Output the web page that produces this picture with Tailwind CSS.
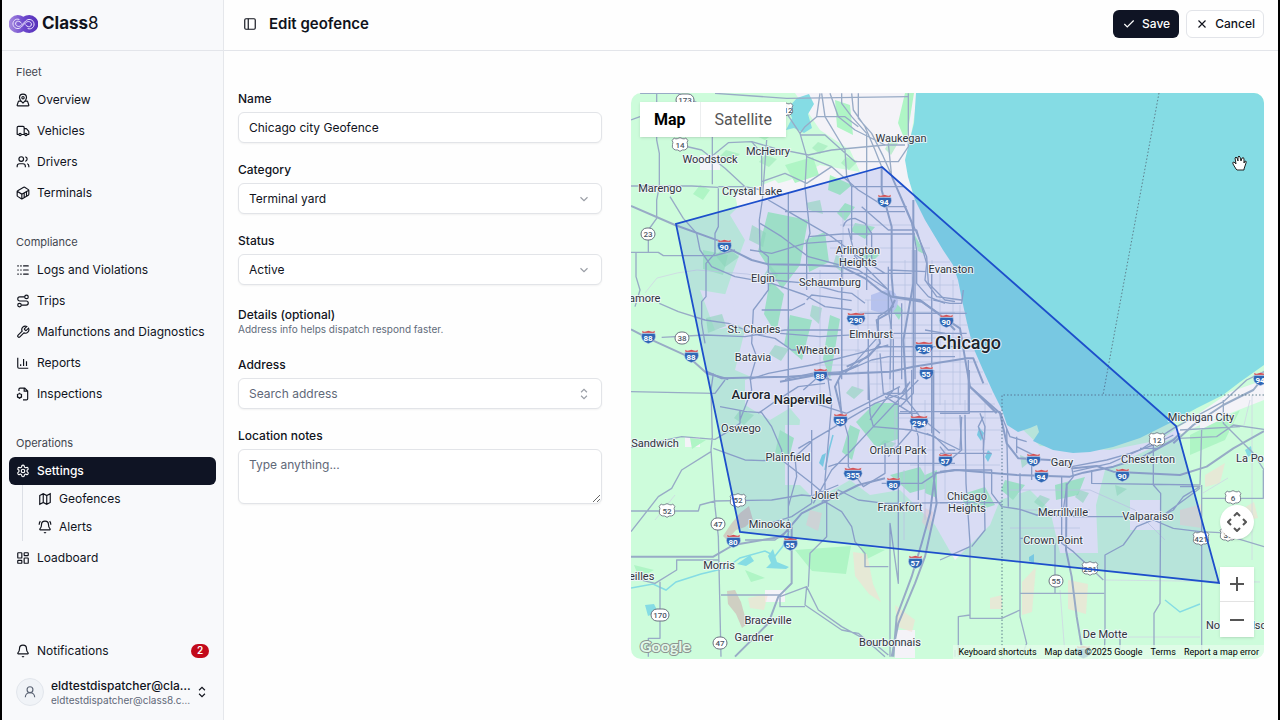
<!DOCTYPE html>
<html lang="en">
<head>
<meta charset="utf-8">
<meta name="viewport" content="width=device-width, initial-scale=1">
<title>Edit geofence - Class8</title>
<script src="https://cdn.jsdelivr.net/npm/@tailwindcss/browser@4"></script>
</head>
<body class="flex min-h-screen border-x-2 border-black bg-[#fefefe] font-[Inter,sans-serif] text-xs text-[#10131c]">

<!-- Shared icons -->
<svg class="hidden" aria-hidden="true">
  <symbol id="updown" viewBox="0 0 24 24"><path d="m7 15 5 5 5-5M7 9l5-5 5 5"/></symbol>
  <symbol id="down" viewBox="0 0 24 24"><path d="m6 9 6 6 6-6"/></symbol>
  <symbol id="bell" viewBox="0 0 24 24"><path d="M10.3 21a2 2 0 0 0 3.4 0M3.3 15.3A1 1 0 0 0 4 17h16a1 1 0 0 0 .7-1.7C19.4 14 18 12.500 18 8A6 6 0 0 0 6 8c0 4.500-1.400 6-2.700 7.300"/></symbol>
  <symbol id="i2" viewBox="0 0 45 42"><path d="M3 10Q-1 20 4 29Q10 38 22 41Q35 38 41 29Q46 20 42 10Z" fill="#2f66b5" stroke="#e3e9f5" stroke-width="1.500"/><path d="M3 2l7 3 12-3 13 3 7-3-1 7H4Z" fill="#cf464d" stroke="#eee" stroke-width="1"/></symbol>
  <symbol id="i3" viewBox="0 0 60 42"><path d="M5 10Q-1 20 6 29Q14 38 30 41Q46 38 54 29Q61 20 55 10Z" fill="#2f66b5" stroke="#e3e9f5" stroke-width="1.500"/><path d="M5 2l9 3 16-3 16 3 9-3-1 7H6Z" fill="#cf464d" stroke="#eee" stroke-width="1"/></symbol>
  <symbol id="us" viewBox="0 0 52 44"><path d="M9 3q5 4 9 2 5-2 8-3 3 1 8 3 4 2 9-2l6 7q-4 6-1 12 3 9-4 14-5 3-11 2l-7 4-7-4q-6 1-11-2-7-5-4-14 3-6-1-12Z" fill="#fff" stroke="#6b7280" stroke-width="2.500"/></symbol>
</svg>

<aside class="flex w-[222px] shrink-0 flex-col border-r border-[#e5e7eb] bg-[#f8f9fb]">
  <div class="flex h-[51px] items-center gap-1 border-b border-[#e3e5ea] px-[7px] pb-[3px]">
    <svg class="h-[18px] w-[29px]" viewBox="0 0 87 54" fill="none" aria-hidden="true">
      <defs><linearGradient id="lg"><stop stop-color="#a78bdf"/><stop offset=".5" stop-color="#6d48cd"/><stop offset="1" stop-color="#5530b8"/></linearGradient></defs>
      <path d="M26 0q10 0 17 5 7-5 18-5a26 26 0 0 1 0 54q-11 0-18-5-7 5-17 5a26 26 0 0 1 0-54Z" fill="url(#lg)"/>
      <path d="M37 24c-8-10-19-5-17 4 3 8 12 8 18 2l12-12c8-8 20-5 24 4 5 12-6 23-17 19M50 30c8 10 19 5 17-4-3-8-12-8-18-2L37 36c-8 8-20 5-24-4-5-12 6-23 17-19" stroke="#eee7ff" stroke-width="3" stroke-linecap="round"/>
    </svg>
    <span class="text-[17px] font-bold">Class<span class="font-normal">8</span></span>
  </div>

  <nav class="flex flex-1 flex-col gap-[21px] px-[7px] pt-[7px] [&_a]:flex [&_a]:h-7 [&_a]:items-center [&_a]:gap-[7px] [&_a]:rounded-md [&_a]:px-[7px] [&_a]:whitespace-nowrap [&_h2]:flex [&_h2]:h-7 [&_h2]:items-center [&_h2]:px-[7px] [&_h2]:text-[11px] [&_h2]:text-[#42464f] [&_svg]:size-[14px] [&_svg]:shrink-0 [&_svg]:fill-none [&_svg]:stroke-current [&_svg]:stroke-2 [&_ul]:flex [&_ul]:flex-col" aria-label="Main">
    <section>
      <h2>Fleet</h2>
      <ul class="gap-[3px]">
        <li><a href="#"><svg viewBox="0 0 24 24"><path d="M18 8c0 3.600-3.900 7.400-5.400 8.800a1 1 0 0 1-1.200 0C9.900 15.400 6 11.600 6 8a6 6 0 0 1 12 0"/><circle cx="12" cy="8" r="2"/><path d="M8.700 14H5a1 1 0 0 0-1 .7l-2 6A1 1 0 0 0 3 22h18a1 1 0 0 0 1-1.300l-2-6a1 1 0 0 0-1-.7h-3.700"/></svg>Overview</a></li>
        <li><a href="#"><svg viewBox="0 0 24 24"><path d="M14 18V6a2 2 0 0 0-2-2H4a2 2 0 0 0-2 2v11a1 1 0 0 0 1 1h2M15 18H9M19 18h2a1 1 0 0 0 1-1v-3.600a1 1 0 0 0-.2-.7l-3.500-4.300a1 1 0 0 0-.8-.4H14"/><circle cx="17" cy="18" r="2"/><circle cx="7" cy="18" r="2"/></svg>Vehicles</a></li>
        <li><a href="#"><svg viewBox="0 0 24 24"><path d="M16 21v-2a4 4 0 0 0-4-4H6a4 4 0 0 0-4 4v2M22 21v-2a4 4 0 0 0-3-3.900M16 3.100a4 4 0 0 1 0 7.800"/><circle cx="9" cy="7" r="4"/></svg>Drivers</a></li>
        <li><a href="#"><svg viewBox="0 0 24 24"><path d="M22 7.700c0-.6-.4-1.200-.8-1.500l-6.300-3.900a1.700 1.700 0 0 0-1.700 0l-10.300 6c-.5.200-.9.800-.9 1.400v6.600c0 .5.400 1.200.8 1.500l6.300 3.900a1.700 1.700 0 0 0 1.700 0l10.300-6c.5-.3.900-1 .9-1.500ZM10 21.900V14L2.100 9.100M10 14l11.900-6.900M14 19.800v-8.100M18 17.500V9.400"/></svg>Terminals</a></li>
      </ul>
    </section>
    <section>
      <h2>Compliance</h2>
      <ul class="gap-[3px]">
        <li><a href="#"><svg viewBox="0 0 24 24"><path d="M13 12h8M13 19h8M13 5h8M3 5h1M3 12h1M3 19h1M8 5h1M8 12h1M8 19h1" stroke-linecap="round"/></svg>Logs and Violations</a></li>
        <li><a href="#"><svg viewBox="0 0 24 24"><circle cx="6" cy="19" r="3"/><path d="M9 19h8.500a3.500 3.500 0 0 0 0-7h-11a3.500 3.500 0 0 1 0-7H15"/><circle cx="18" cy="5" r="3"/></svg>Trips</a></li>
        <li><a href="#"><svg viewBox="0 0 24 24"><path d="M14.700 6.300a1 1 0 0 0 0 1.400l1.600 1.600a1 1 0 0 0 1.400 0l3.800-3.800a6 6 0 0 1-8 8l-6.900 6.900a2.100 2.100 0 0 1-3-3l6.900-6.900a6 6 0 0 1 8-8z"/></svg>Malfunctions and Diagnostics</a></li>
        <li><a href="#"><svg viewBox="0 0 24 24"><path d="M3 3v16a2 2 0 0 0 2 2h16M18 17V9M13 17V5M8 17v-3"/></svg>Reports</a></li>
        <li><a href="#"><svg viewBox="0 0 24 24"><path d="M5 7V4a2 2 0 0 1 2-2h8l5 5v13a2 2 0 0 1-2 2h-6M14 2v5h6"/><circle cx="6" cy="15" r="3.500"/><path d="M6 10v1.500M6 18.500V20M1.700 12.500l1.300.8M9 16.700l1.300.8M1.700 17.500l1.300-.8M9 13.300l1.300-.8"/></svg>Inspections</a></li>
      </ul>
    </section>
    <section>
      <h2>Operations</h2>
      <ul>
        <li><a href="#" class="bg-[#0f1424] font-medium text-white" aria-current="page"><svg viewBox="0 0 24 24"><path d="M12.200 2h-.4a2 2 0 0 0-2 2v.2a2 2 0 0 1-1 1.700l-.4.300a2 2 0 0 1-2 0l-.2-.1a2 2 0 0 0-2.700.7l-.2.400a2 2 0 0 0 .7 2.700l.2.100a2 2 0 0 1 1 1.700v.5a2 2 0 0 1-1 1.700l-.2.100a2 2 0 0 0-.7 2.700l.2.400a2 2 0 0 0 2.700.7l.2-.1a2 2 0 0 1 2 0l.4.300a2 2 0 0 1 1 1.700v.2a2 2 0 0 0 2 2h.4a2 2 0 0 0 2-2v-.2a2 2 0 0 1 1-1.700l.4-.3a2 2 0 0 1 2 0l.2.100a2 2 0 0 0 2.700-.7l.2-.4a2 2 0 0 0-.7-2.700l-.2-.1a2 2 0 0 1-1-1.700v-.5a2 2 0 0 1 1-1.700l.2-.1a2 2 0 0 0 .7-2.700l-.2-.4a2 2 0 0 0-2.700-.7l-.2.100a2 2 0 0 1-2 0l-.4-.3a2 2 0 0 1-1-1.700V4a2 2 0 0 0-2-2z"/><circle cx="12" cy="12" r="3"/></svg>Settings</a>
          <ul class="mb-[3px] ml-[13px] border-l border-[#dcdfe5] pl-2">
            <li><a href="#"><svg viewBox="0 0 24 24"><path d="m3 6 6-3 6 3 6-3v15l-6 3-6-3-6 3ZM9 3v15M15 6v15"/></svg>Geofences</a></li>
            <li><a href="#"><svg viewBox="0 0 24 24"><use href="#bell"/><path d="M22 8c0-2.300-.8-4.300-2-6M4 2C2.800 3.700 2 5.700 2 8"/></svg>Alerts</a></li>
          </ul>
        </li>
        <li><a href="#"><svg viewBox="0 0 24 24"><rect x="3" y="3" width="7" height="9" rx="1"/><rect x="14" y="3" width="7" height="5" rx="1"/><rect x="14" y="12" width="7" height="9" rx="1"/><rect x="3" y="16" width="7" height="5" rx="1"/></svg>Loadboard</a></li>
      </ul>
    </section>
  </nav>

  <div class="flex flex-col gap-[7px] px-[7px] pb-2">
    <a href="#" class="flex h-7 items-center gap-[7px] px-[7px]">
      <svg class="size-[14px] fill-none stroke-current stroke-2"><use href="#bell"/></svg>
      <span class="flex-1">Notifications</span>
      <span class="flex h-[14px] w-[18px] items-center justify-center rounded-full bg-[#c20a1b] text-[10px] font-semibold text-white">2</span>
    </a>
    <button type="button" class="flex h-10 items-center gap-[7px] px-[7px] text-left">
      <span class="flex size-7 shrink-0 items-center justify-center rounded-full border border-[#e2e6ec] bg-[#f0f3f7] text-[#5b6474]">
        <svg class="size-[14px] fill-none stroke-current stroke-2" viewBox="0 0 24 24"><circle cx="12" cy="8" r="5"/><path d="M20 21a8 8 0 0 0-16 0"/></svg>
      </span>
      <span class="-mr-[5px] flex min-w-0 flex-1 flex-col">
        <span class="truncate leading-[15px] font-medium">eldtestdispatcher@class8.com</span>
        <span class="truncate text-[10px] leading-[14px] font-normal text-[#5f6878]">eldtestdispatcher@class8.com</span>
      </span>
      <svg class="size-[14px] shrink-0 fill-none stroke-current stroke-2"><use href="#updown"/></svg>
    </button>
  </div>
</aside>

<div class="flex min-w-0 flex-1 flex-col">
  <header class="flex h-[51px] items-center border-b border-[#e3e5ea] px-[14px] pb-[3px]">
    <button type="button" class="ml-[5px] mr-3" aria-label="Toggle sidebar">
      <svg class="size-[14px] fill-none stroke-current stroke-2" viewBox="0 0 24 24"><rect x="3" y="3" width="18" height="18" rx="2"/><path d="M9 3v18"/></svg>
    </button>
    <h1 class="flex-1 text-[15px] font-semibold">Edit geofence</h1>
    <div class="flex gap-[7px] font-medium">
      <button type="button" class="flex h-7 items-center gap-1.5 rounded-md bg-[#0f1424] px-[9px] text-white"><svg class="size-[14px] fill-none stroke-current stroke-2" viewBox="0 0 24 24"><path d="M20 6 9 17l-5-5"/></svg>Save</button>
      <button type="button" class="flex h-7 items-center gap-1.5 rounded-md border border-[#e2e4e9] bg-white px-2"><svg class="size-[14px] fill-none stroke-current stroke-2" viewBox="0 0 24 24"><path d="M18 6 6 18M6 6l12 12"/></svg>Cancel</button>
    </div>
  </header>

  <main class="grid grid-cols-[364fr_633fr] items-start gap-[29px] px-[14px] pt-[42px]">
    <form class="flex flex-col gap-[21px] [&_label]:leading-3 [&_label]:font-medium">
      <div class="flex flex-col gap-[7px]">
        <label for="name">Name</label>
        <input id="name" value="Chicago city Geofence" class="h-[31px] w-full rounded-md border border-[#e2e4e8] bg-white px-[10px] shadow-xs">
      </div>
      <div class="flex flex-col gap-[7px]">
        <label for="category">Category</label>
        <div class="relative">
          <select id="category" class="h-[31px] w-full appearance-none rounded-md border border-[#e2e4e8] bg-white px-[10px] shadow-xs"><option>Terminal yard</option></select>
          <svg class="pointer-events-none absolute top-[9px] right-[11px] size-[14px] fill-none stroke-[#9a9ea6] stroke-2"><use href="#down"/></svg>
        </div>
      </div>
      <div class="flex flex-col gap-[7px]">
        <label for="status">Status</label>
        <div class="relative">
          <select id="status" class="h-[31px] w-full appearance-none rounded-md border border-[#e2e4e8] bg-white px-[10px] shadow-xs"><option>Active</option></select>
          <svg class="pointer-events-none absolute top-[9px] right-[11px] size-[14px] fill-none stroke-[#9a9ea6] stroke-2"><use href="#down"/></svg>
        </div>
      </div>
      <div class="flex flex-col pt-px pb-[2px]">
        <h2 class="leading-[15px] font-medium">Details (optional)</h2>
        <p class="text-[10px] leading-[14px] text-[#5f6b7a]">Address info helps dispatch respond faster.</p>
      </div>
      <div class="flex flex-col gap-[7px]">
        <label for="address">Address</label>
        <div class="relative">
          <input id="address" placeholder="Search address" class="h-[31px] w-full rounded-md border border-[#e2e4e8] bg-white px-[10px] shadow-xs placeholder:text-[#5f6878]">
          <svg class="pointer-events-none absolute top-[9px] right-[11px] size-[14px] fill-none stroke-[#9a9ea6] stroke-2"><use href="#updown"/></svg>
        </div>
      </div>
      <div class="flex flex-col gap-[7px]">
        <label for="notes">Location notes</label>
        <textarea id="notes" placeholder="Type anything..." class="block h-[55px] w-full rounded-md border border-[#e2e4e8] bg-white px-[10px] py-[7px] shadow-xs placeholder:text-[#5f6878]"></textarea>
      </div>
    </form>

    <section class="relative overflow-hidden rounded-[10px] font-[Roboto,sans-serif]" aria-label="Geofence map">
      <svg class="block w-full" viewBox="631 93 633 566" role="img" aria-label="Map of the Chicago area with the geofence">
        <rect x="631" y="93" width="633" height="566" fill="#cdfcdb"/>
        <!-- built-up areas -->
        <g fill="#f4f3f8">
          <path d="M795 93H918L907 160L960 280L1002 410L1040 446L1110 450L1160 440L1230 392L1264 380V400L1200 425L1105 470L1096 505L1098 553H1060L1050 510L1030 490L1000 500L990 525L955 560L935 525L900 490L870 495L850 480L815 500L795 480L800 420L770 385L735 370L745 330L720 310L730 280L745 240L730 215L755 190L790 180L820 165L860 172L850 150L820 130Z"/>
          <path d="M735 195l40-15 20 20-10 45-40-5ZM700 290l30 5 10 30-25 5ZM745 380l30-10 20 35-25 15-25-15ZM785 425h25v60h-25ZM1130 500h30v30h-30ZM685 437h15v10h-15ZM765 590h20v12h-20ZM895 630h20v28h-20ZM700 155h20v15h-20ZM1200 420h30v12h-30Z"/>
        </g>
        <!-- woods and farmland -->
        <g fill="#aff5c5">
          <path d="M768 212l40 8-8 45-18 24-24-38ZM790 315l22 5-10 40-18-15ZM875 403h23v36l-22 8-20-25ZM805 240l20-8 4 30-20 10ZM703 250l25 5-5 20-20-6ZM745 115l25-10 15 20-20 15-22-10ZM905 93h9l-8 50-8-20ZM835 100l15 5 3 30-16-8ZM785 165l28-8 6 18-24 8ZM830 175l22 10-12 10-12-5ZM770 280l14 14-8 40-12-20ZM890 475l30-8 12 20-22 6ZM795 550l56-4-5 28-34-3ZM1055 485l30-8-7 18-22 5ZM925 475l12-5v28l-12-5ZM845 203l10 4-10 14-8-8ZM912 230l14 25-8-4ZM830 315l10 4-10 60-7-20ZM893 300l10 10-4 10-7-10ZM850 425l10 5-8 30-10-8ZM700 185l10 5-7 10-10-6ZM634 565l20 5-15 8ZM690 438l16 2-14 9ZM860 545l25 5-20 10ZM1005 480l20 5-12 15-12-10ZM1190 435l50-25-15 30-35 15ZM960 495l25-8 10 18-25 8ZM745 570l20 8-14 4ZM780 430l14 8-5 20-14-5ZM855 223l20 4-10 12-14-8ZM868 250l12 4-12 12-8-8Z"/>
        </g>
        <g fill="#9ceab7" opacity=".6">
          <path d="M715 255l12-8 12 10-14 10ZM752 225l14 8-3 14-14-7ZM770 265l8 10-8 12-7-10ZM836 255l10 4-3 14-10-8ZM806 203l14-3 3 14-14-4ZM706 318l16-4 4 12-18 7ZM775 345l14 4-8 12-12-7ZM812 305l10 3-3 16-9-8ZM740 410l14 5-10 10-10-7ZM852 386l12 4-10 9-8-6ZM884 440l12 3-8 9-10-6ZM1020 455l12 5-10 8ZM1080 490l9 3-6 10-8-6ZM1115 485l12 4-10 7ZM1128 430l16-4-8 9ZM846 157l12 4-9 9-8-7ZM818 142l10 4-8 8-8-6ZM890 140l8 3-7 12-6-6ZM650 110l10 4-7 8-9-5ZM726 150l14 4-10 8-10-6ZM765 155l12 4-8 8-10-5ZM1040 495l10 4-8 9-8-6Z"/>
        </g>
        <g fill="#f6dcd2" opacity=".6">
          <path d="M853 552l14 2 6 30 8 18-12-8-14-18ZM748 598l20-4-4 16-14-2ZM895 605l20 15-3 12-14-5ZM990 598l12-3v14h-12ZM1022 582l14-15-4 45-10 3ZM1068 580l20 4-2 30-18-5ZM1180 510l22-6v24l-22-3ZM1205 475l20-12-5 20-15 4ZM810 510l12 3-4 18-12-6ZM925 508l8 4-3 20-8-10ZM1240 510l14-8 4 16-14 3Z"/>
        </g>
        <g fill="#cfc3bb" opacity=".8"><path d="M740 513l9-7 4 14-8 7-9 3-9 10-4-4 8-12ZM727 591l8-1 6 12 6 22-5 4-6-14-8-10Z"/></g>
        <path d="M882 291q14-4 16 10-1 13-14 13l-13-4v-15Z" fill="#ccd5f2"/>
        <!-- Lake Michigan and smaller waters -->
        <g fill="#85dce4">
          <path d="M916 93L914 123L909 143L905 160L908 177L915 200L925 220L943 250L953 265L958 280L962 300L967 323L973 347L983 370L993 392L1002 410L1007 425L1018 432L1030 428L1037 425L1039 432L1033 441L1053 450L1073 453L1090 452L1113 447L1140 438L1170 423L1197 408L1223 395L1240 382L1264 365V93Z"/>
          <path d="M797 98l12-4 5 10-6 10 4 14-8 5-10-5-8 2 6-12-4-10ZM737 564l13-9 4 6-8 5ZM768 556l5-7 4 13 12 5-3 2-20-1 5-5ZM645 605l9-1 4 8-10 4ZM979 427l5 6-3 8-4-6ZM988 450l4 4-4 8-3-5ZM1245 450l6-4 2 8-5 3ZM1029 557l5-3v9l-5-2ZM822 455l4-2-3 14-4-4Z"/>
        </g>
        <path d="M631 588l22-4 13 6 10-8 25-8 25-6 14-10 25-7 10 5 8-10 6-15M825 470l4-20 4-15M1165 600l15 12 20-8" fill="none" stroke="#85dce4" stroke-width="1.500"/>

        <!-- minor streets -->
        <g fill="none" stroke="#cfd6e4" stroke-width=".8">
          <path d="M905 260V395M912 250V400M932 260V400M940 270V405M953 280V410M960 305V405M868 300V400M877 320V400M858 290V390M890 320V390M843 210V290M820 270V400M895 400V450M925 400V520M945 400V500M965 400V460M985 400V440M904 470V540"/>
          <path d="M870 285H958M865 300H962M860 312H965M850 325H968M870 338H972M855 351H975M865 362H978M855 372H983M870 384H988M880 394H992M895 404H995M895 418H1000M905 430H1005M910 450H1000M910 465H1000M840 225H915M830 248H930M840 262H950M800 350H860M810 365H860M1010 490H1090M1020 510H1090M1010 528H1080"/>
          <path d="M645 293l12-15 20-5 20-3 50 4 40 8M1090 490l45 20 30 30M1105 637h95M1252 395v165M1250 400l-6 25M1105 580l155 2M655 520l20-25M1060 590l5 65M1228 478l-25 15"/>
        </g>

        <!-- highways: northwest -->
        <g transform="translate(625 90) scale(.33333)" fill="none" stroke="#98abc6" stroke-width="4" stroke-linejoin="round">
          <path stroke-width="6" d="M18 348L150 405L280 452L310 475L380 510L430 523L560 525L650 530L720 565L770 605L800 620L890 635L940 670L990 720M18 718L70 745L190 800L245 850L310 868M770 230V300L800 410V560L805 620"/>
          <path d="M18 288H200L280 292M95 10V150L103 190V290L95 330V385L70 420V487M18 487H100L115 497H270L330 480M33 487V560L45 600L30 650M262 140V283M135 320L175 385L215 430L225 480L260 530L330 560L440 580L540 615L600 650L680 660M165 165L230 180L300 235L360 290M265 195L310 158L380 155L450 175L550 195L620 180L780 165H840"/>
          <path d="M280 295V410L270 430V490L243 520V620L230 635V700L240 760M103 640L160 665L240 690L310 700L400 735L450 745L500 780L630 780M110 742L240 735L360 740L480 720H650M425 150L412 330L403 390L405 480L430 500V600L385 660L380 760L395 800L375 868M485 70L525 130L545 200L540 290L555 430L545 460V600"/>
          <path d="M585 10L575 80L540 110L525 130M590 10L600 80L660 180L665 260L680 290V450M615 10L640 80L690 120L780 165M650 10V40L680 80L725 130M680 10L685 60L720 110L750 180L770 230M700 10V85L740 130L775 200L850 370L905 500L910 580L960 630L990 635M790 160L800 260L860 400L875 480V580L910 620L960 640M850 10V170L820 215H690L650 180L600 135H525"/>
          <path d="M410 275L480 250L545 280L620 230L700 300L780 350H845M545 200L620 230M430 330L490 365L620 440L700 500L780 550H860M480 365H840M405 400L470 440L550 500L700 540L790 600L805 650L760 680V740L660 850M550 440L650 432H870M430 550H860M375 480L440 490L540 460L650 452M655 410Q660 385 690 385L720 400L740 430V520M670 415L690 500L790 600"/>
          <path d="M490 310V868M650 450V868M545 630L560 615L600 620L680 632M720 640L680 610L640 605L550 580L440 570M700 670H990M800 650L795 868M830 640V868M870 480V868M725 130V600M375 868L430 850L560 825L700 790L790 765M480 868L560 850L660 845L740 810L790 800H990M680 290H840M410 660H500L540 640M18 90L45 80M45 10H160L220 40M270 10L485 25L850 20M575 80H660L700 110M280 290L360 290L410 300L410 190L380 155M960 730L900 720M880 770H760L700 820"/>
        </g>
        <!-- highways: southwest -->
        <g transform="translate(625 370) scale(.33333)" fill="none" stroke="#98abc6" stroke-width="4" stroke-linejoin="round">
          <path stroke-width="6" d="M245 5L290 25L490 20L640 10L700 -15M18 560H265L325 525L470 500L530 430L600 395L700 345L780 325M500 470V640L460 680L430 760L330 860M925 0V310L935 400L900 560L870 640L820 760L800 860M930 310L915 430L890 520L860 620L815 740L805 860M990 300L930 310"/>
          <path d="M18 65L160 68L270 70L300 30M265 10L258 60L262 200L258 240L270 410L280 500L288 860M18 232L170 200L270 208L300 190L345 160V120M258 245L170 300L140 355L100 380L18 485M265 235L360 270L430 272M18 423H220L225 405L270 393L440 390L530 375L560 378L640 345M285 110L365 125L410 128L440 170L470 240V270L560 340L590 365M375 20L380 60L345 150M400 130L450 95L520 50L600 40M18 623L90 640L155 600V570H280M105 635V805H70V860M288 675H465V710H540M465 680L545 650L560 680L580 720L650 770L760 830L790 855M545 650L540 705L650 780L700 790L780 860"/>
          <path d="M550 650L555 550L605 500V380M600 395L650 425L680 470L690 515L720 550V590H790M490 0V500M565 400L620 300L680 240L745 170L820 90L880 30M520 235L630 170L750 100L830 70L850 40M610 290L640 280H990M640 30L650 130L670 200V290L715 350L780 310V220M605 0L620 100L600 330V400M730 0L735 130L745 170L860 180L930 200L970 240H990M820 50V640L795 460V860M780 80L860 130L880 200V390M860 0V180L790 260M535 60L580 20L620 30M590 395L640 360L700 390L780 400L990 398M770 340L890 340L935 310M435 460L500 440L560 400M360 510L450 510L490 480M820 130H880M560 180V400M490 410L515 320L510 260L560 215"/>
        </g>
        <!-- highways: southeast -->
        <g transform="translate(940 370) scale(.33333)" fill="none" stroke="#98abc6" stroke-width="4" stroke-linejoin="round">
          <path stroke-width="6" d="M90 50L180 130L200 220L235 265L330 270L400 295L470 288L520 305L720 315L800 290L880 235L972 183M0 305L50 300L230 315L390 320L430 308L520 290L600 265L700 210L720 190M380 340L378 540L395 620L410 740L430 860M700 220L760 165L850 105L940 60L972 20"/>
          <path d="M88 0V130H0M60 135L65 240L30 270L0 230M75 135L78 340L90 520V745H185L240 720M130 140L115 170L130 210L135 480L95 530M0 125H180L210 200L260 215M155 250H0M40 300H155V370L185 410L240 418L290 435L380 438M240 310V740L260 820L245 860M240 670H493M200 175L205 410M365 320V520L400 545L490 630M380 345L400 320L395 290L500 270L570 250L640 225L700 195M0 398H185M90 735L55 740V860"/>
          <path d="M400 305L510 280L600 240L700 175L850 95L920 30L972 5M230 230L290 260M230 200V250M455 300V340L780 345L785 180M715 205L830 200L880 165L972 178M720 180L900 170M850 90V160L940 250L972 300M720 350L780 350L730 380L700 420L650 445L590 470L550 525L495 555V790L493 860M400 440H560L640 450L700 475L780 485L840 488M640 225V345L662 370L660 700L642 730V830L645 860M785 345V860M785 385H970V300M840 490L972 530M600 235L655 235M290 435L420 438M0 570L90 530M380 350L370 420M275 250V330M650 450L780 355M240 505L250 505M345 520V670M540 790V860M45 840V860"/>
        </g>
        <!-- highways: city centre -->
        <g transform="translate(780 200) scale(.33333)" fill="none" stroke="#98abc6" stroke-width="4" stroke-linejoin="round">
          <path stroke-width="6" d="M340 290L420 300L480 345L540 385L555 475L570 560L650 640M0 545L110 525L330 515L400 500L560 475H580L610 550M345 300L325 340L290 360L300 430L265 470L200 500M190 510L165 560L190 660M400 0V250L370 420L380 600"/>
          <path d="M325 200V330L340 420V570L300 620L270 660M400 230V580L360 620M455 220V700M245 20L325 90H410L440 190L435 240L470 290L545 300M325 210L440 215M300 440L430 440H580M460 300L510 310H545L550 270M0 400L120 410L300 400H560M300 340H560M390 545L370 580L310 580L300 460M310 580L380 600L420 650L480 700M360 635H640M565 480V635M545 650L540 750M600 640L615 680L610 750M40 590L200 640L360 560M440 700L540 750M265 400V600M185 200V520"/>
        </g>

        <path d="M1159 93L1103 395M1264 395H1002V659" fill="none" stroke="#5e7f8c" stroke-width="1" stroke-dasharray="1.500 2"/>

        <!-- geofence area -->
        <path d="M882 167L676 224L740 532L1219 583L1176 426Z" fill="#2a48dc" fill-opacity=".13"/>

        <!-- route shields -->
        <g font-size="8" font-weight="700" fill="#fff" text-anchor="middle">
          <g id="two-digit">
            <use href="#i2" x="717" y="239" width="15" height="14"/><text x="724" y="250">90</text>
            <use href="#i2" x="877" y="194" width="15" height="14"/><text x="884" y="205">94</text>
            <use href="#i2" x="641" y="330" width="15" height="14"/><text x="648" y="341">88</text>
            <use href="#i2" x="684" y="349" width="15" height="14"/><text x="691" y="360">88</text>
            <use href="#i2" x="813" y="368" width="15" height="14"/><text x="820" y="379">88</text>
            <use href="#i2" x="939" y="314" width="15" height="14"/><text x="946" y="325">90</text>
            <use href="#i2" x="919" y="366" width="15" height="14"/><text x="926" y="377">55</text>
            <use href="#i2" x="833" y="413" width="15" height="14"/><text x="840" y="424">55</text>
            <use href="#i2" x="938" y="453" width="15" height="14"/><text x="945" y="464">57</text>
            <use href="#i2" x="886" y="477" width="15" height="14"/><text x="893" y="488">80</text>
            <use href="#i2" x="726" y="534" width="15" height="14"/><text x="733" y="545">80</text>
            <use href="#i2" x="783" y="537" width="15" height="14"/><text x="790" y="548">55</text>
            <use href="#i2" x="908" y="555" width="15" height="14"/><text x="915" y="566">57</text>
            <use href="#i2" x="1026" y="453" width="15" height="14"/><text x="1033" y="464">90</text>
            <use href="#i2" x="1034" y="469" width="15" height="14"/><text x="1041" y="480">94</text>
            <use href="#i2" x="1115" y="468" width="15" height="14"/><text x="1122" y="479">90</text>
            <use href="#i2" x="1253" y="372" width="15" height="14"/><text x="1260" y="383">94</text>
            <use href="#i2" x="1076" y="645" width="15" height="14"/>
          </g>
          <g id="three-digit">
            <use href="#i3" x="846" y="312" width="20" height="14"/><text x="856" y="323">290</text>
            <use href="#i3" x="914" y="341" width="20" height="14"/><text x="924" y="352">290</text>
            <use href="#i3" x="909" y="415" width="20" height="14"/><text x="919" y="426">294</text>
            <use href="#i3" x="843" y="467" width="20" height="14"/><text x="853" y="478">355</text>
          </g>
        </g>
        <g font-size="8" font-weight="500" fill="#4b5563" text-anchor="middle">
          <use href="#us" x="671" y="137" width="18" height="15"/><text x="680" y="148">14</text>
          <use href="#us" x="776" y="102" width="18" height="15"/><text x="788" y="113">12</text>
          <use href="#us" x="658" y="503" width="18" height="15"/><text x="667" y="514">52</text>
          <use href="#us" x="729" y="493" width="18" height="15"/><text x="738" y="503">52</text>
          <use href="#us" x="1148" y="432" width="18" height="15"/><text x="1157" y="443">12</text>
          <use href="#us" x="1224" y="490" width="18" height="15"/><text x="1233" y="501">6</text>
          <use href="#us" x="1192" y="531" width="18" height="15"/><text x="1201" y="542">421</text>
          <use href="#us" x="1081" y="561" width="18" height="15"/><text x="1090" y="572">231</text>
          <use href="#us" x="1219" y="527" width="18" height="15"/><text x="1228" y="538">35</text>
          <g fill="#fff" stroke="#6b7280">
            <rect x="676" y="94" width="18" height="12" rx="6"/><rect x="641" y="228" width="14" height="12" rx="6"/><rect x="675" y="332" width="14" height="12" rx="6"/><rect x="711" y="518" width="14" height="12" rx="6"/><rect x="651" y="609" width="18" height="12" rx="6"/><rect x="713" y="637" width="14" height="12" rx="6"/><rect x="1049" y="575" width="14" height="12" rx="6"/>
          </g>
          <text x="685" y="103">173</text><text x="648" y="237">23</text><text x="682" y="341">38</text><text x="718" y="527">47</text><text x="660" y="618">170</text><text x="720" y="646">47</text><text x="1056" y="584">55</text>
        </g>

        <!-- place names -->
        <g font-size="11" fill="#30343d" stroke="#f3f7fb" stroke-opacity=".85" stroke-width="2" paint-order="stroke" stroke-linejoin="round" text-anchor="middle">
          <text x="901" y="142">Waukegan</text><text x="768" y="155">McHenry</text><text x="710" y="163">Woodstock</text><text x="660" y="192">Marengo</text><text x="752" y="195">Crystal Lake</text>
          <text x="858" y="254">Arlington</text><text x="858" y="266">Heights</text><text x="763" y="282">Elgin</text><text x="830" y="286">Schaumburg</text><text x="951" y="273">Evanston</text>
          <text x="629" y="302" text-anchor="start">amore</text><text x="754" y="333">St. Charles</text><text x="871" y="338">Elmhurst</text><text x="818" y="354">Wheaton</text><text x="753" y="361">Batavia</text>
          <text x="741" y="432">Oswego</text><text x="655" y="447">Sandwich</text><text x="788" y="461">Plainfield</text><text x="898" y="454">Orland Park</text><text x="825" y="499">Joliet</text><text x="900" y="511">Frankfort</text>
          <text x="967" y="500">Chicago</text><text x="967" y="512">Heights</text><text x="1062" y="466">Gary</text><text x="1148" y="463">Chesterton</text><text x="1201" y="421">Michigan City</text><text x="1236" y="462" text-anchor="start">La Porte</text>
          <text x="1063" y="516">Merrillville</text><text x="1148" y="520">Valparaiso</text><text x="1053" y="544">Crown Point</text><text x="770" y="528">Minooka</text><text x="719" y="569">Morris</text><text x="629" y="580" text-anchor="start">eilles</text>
          <text x="768" y="624">Braceville</text><text x="754" y="641">Gardner</text><text x="890" y="646">Bourbonnais</text><text x="1105" y="638">De Motte</text><text x="1206" y="629" text-anchor="start">North Judson</text>
          <g font-weight="500" fill="#20242c"><text x="751" y="399" font-size="13">Aurora</text><text x="803" y="404" font-size="13">Naperville</text><text x="968" y="349" font-size="18">Chicago</text></g>
        </g>

        <!-- geofence outline -->
        <path d="M882 167L676 224L740 532L1219 583L1176 426Z" fill="none" stroke="#1d4fcb" stroke-width="1.800"/>

        <text x="640" y="652" font-size="16" font-family="Lato, sans-serif" font-weight="700" fill="#e3f9e9" stroke="#8b9490" stroke-width="2" paint-order="stroke">Google</text>

        <path d="M1236 169l-3-5q-1-2 1-2l2 2-1-6q1-2 2 0l1 3v-4q1-2 2 0l1 4 1-3q2-1 2 1v4l1-2q2 0 1 2l-2 6v1h-7Z" fill="#fff" stroke="#222" stroke-width="1"/>
      </svg>

      <div class="absolute top-[9px] left-[9px] flex h-[35px] bg-white text-base shadow-sm">
        <button type="button" class="border-r border-[#eceeef] px-[14px] font-bold text-black">Map</button>
        <button type="button" class="px-[14px] text-[#565656]">Satellite</button>
      </div>
      <button type="button" class="absolute right-[10px] bottom-[120px] flex size-[34px] items-center justify-center rounded-full bg-white text-[#555] shadow-sm" aria-label="Move the map">
        <svg class="size-[20px] fill-none stroke-current stroke-2" viewBox="0 0 20 20"><path d="m7 4 3-3 3 3M7 16l3 3 3-3M4 7l-3 3 3 3M16 7l3 3-3 3"/></svg>
      </button>
      <div class="absolute right-[10px] bottom-[22px] flex w-[34px] flex-col divide-y divide-[#e3e3e3] bg-white text-[#555] shadow-sm">
        <button type="button" class="flex h-[35px] items-center justify-center" aria-label="Zoom in"><svg class="size-[14px] stroke-current stroke-2" viewBox="0 0 14 14"><path d="M0 7h14M7 0v14"/></svg></button>
        <button type="button" class="flex h-[35px] items-center justify-center" aria-label="Zoom out"><svg class="size-[14px] stroke-current stroke-2" viewBox="0 0 14 14"><path d="M0 7h14"/></svg></button>
      </div>
      <div class="absolute right-0 bottom-0 flex h-[14px] items-center gap-2 bg-[#e4fbea]/80 px-[5px] text-[9px] whitespace-nowrap text-black">
        <button type="button">Keyboard shortcuts</button>
        <span>Map data ©2025 Google</span>
        <a href="#">Terms</a>
        <a href="#">Report a map error</a>
      </div>
    </section>
  </main>
</div>
</body>
</html>
